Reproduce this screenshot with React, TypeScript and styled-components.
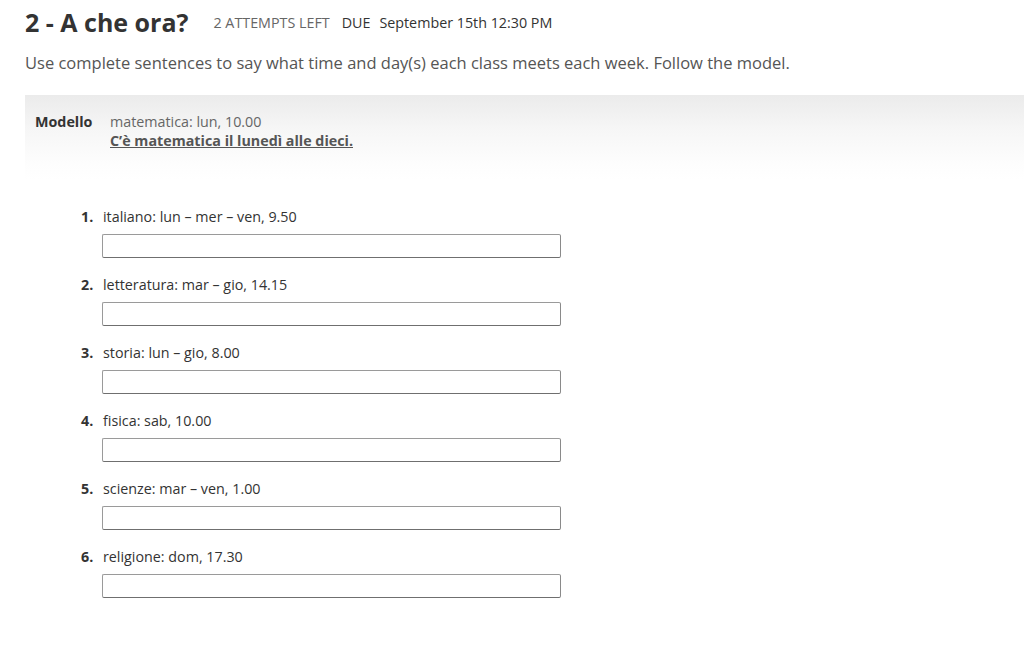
import React from "react";
import styled, { createGlobalStyle } from "styled-components";

const GlobalStyle = createGlobalStyle`
  body {
    margin: 0;
    background: #fff;
    font-family: "Open Sans", "Liberation Sans", sans-serif;
    color: #333;
  }
`;

const Page = styled.div`
  padding: 7px 0 40px 25px;
`;

const Header = styled.div`
  display: flex;
  align-items: center;
  gap: 25px;
`;

const Title = styled.h1`
  margin: 0;
  font-size: 25px;
  line-height: 30px;
  font-weight: 700;
  color: #333;
`;

const Meta = styled.div`
  display: flex;
  align-items: baseline;
  gap: 12px;
  font-size: 14.3px;
  line-height: 18px;
  padding-top: 2px;
`;

const Attempts = styled.span`
  color: #666;
  text-transform: uppercase;
`;

const Due = styled.span`
  color: #333;
  span {
    margin-right: 9px;
  }
`;

const Instructions = styled.p`
  margin: 15px 0 0;
  font-size: 16.5px;
  line-height: 22px;
  color: #555;
`;

const ModelBox = styled.div`
  margin-top: 21px;
  height: 85px;
  box-sizing: border-box;
  padding: 17px 10px 0;
  background: linear-gradient(to bottom, #ebebeb 0%, #f6f6f6 40%, #fdfdfd 80%, #ffffff 100%);
  display: grid;
  grid-template-columns: 75px auto;
  font-size: 14.3px;
  line-height: 19px;
`;

const ModelLabel = styled.div`
  font-weight: 700;
  color: #333;
`;

const ModelPrompt = styled.div`
  color: #666;
`;

const ModelAnswer = styled.div`
  font-weight: 700;
  color: #555;
  text-decoration: underline;
`;

const List = styled.ol`
  list-style: none;
  margin: 28px 0 0;
  padding: 0 0 0 56px;
`;

const Item = styled.li`
  display: grid;
  grid-template-columns: 22px 458px;
  row-gap: 8px;
  margin-bottom: 18px;
  font-size: 14.3px;
  line-height: 18px;
`;

const Num = styled.span`
  font-weight: 700;
  color: #333;
`;

const Prompt = styled.span`
  color: #333;
`;

const Answer = styled.input`
  grid-column: 2;
  margin-left: -1px;
  height: 24px;
  box-sizing: border-box;
  border: 1px solid #9a9a9a;
  border-bottom-color: #6f6f6f;
  border-right-color: #8a8a8a;
  border-radius: 2px;
  background: #fff;
  font-family: inherit;
  font-size: 14px;
  padding: 0 6px;
`;

const items = [
  "italiano: lun – mer – ven, 9.50",
  "letteratura: mar – gio, 14.15",
  "storia: lun – gio, 8.00",
  "fisica: sab, 10.00",
  "scienze: mar – ven, 1.00",
  "religione: dom, 17.30",
];

export default function App() {
  return (
    <>
      <GlobalStyle />
      <Page>
        <Header>
          <Title>2 - A che ora?</Title>
          <Meta>
            <Attempts>2 attempts left</Attempts>
            <Due>
              <span>DUE</span>September 15th 12:30 PM
            </Due>
          </Meta>
        </Header>
        <Instructions>
          Use complete sentences to say what time and day(s) each class meets each week. Follow the model.
        </Instructions>
        <ModelBox>
          <ModelLabel>Modello</ModelLabel>
          <div>
            <ModelPrompt>matematica: lun, 10.00</ModelPrompt>
            <ModelAnswer>C’è matematica il lunedì alle dieci.</ModelAnswer>
          </div>
        </ModelBox>
        <List>
          {items.map((text, i) => (
            <Item key={i}>
              <Num>{i + 1}.</Num>
              <Prompt>{text}</Prompt>
              <Answer type="text" />
            </Item>
          ))}
        </List>
      </Page>
    </>
  );
}
